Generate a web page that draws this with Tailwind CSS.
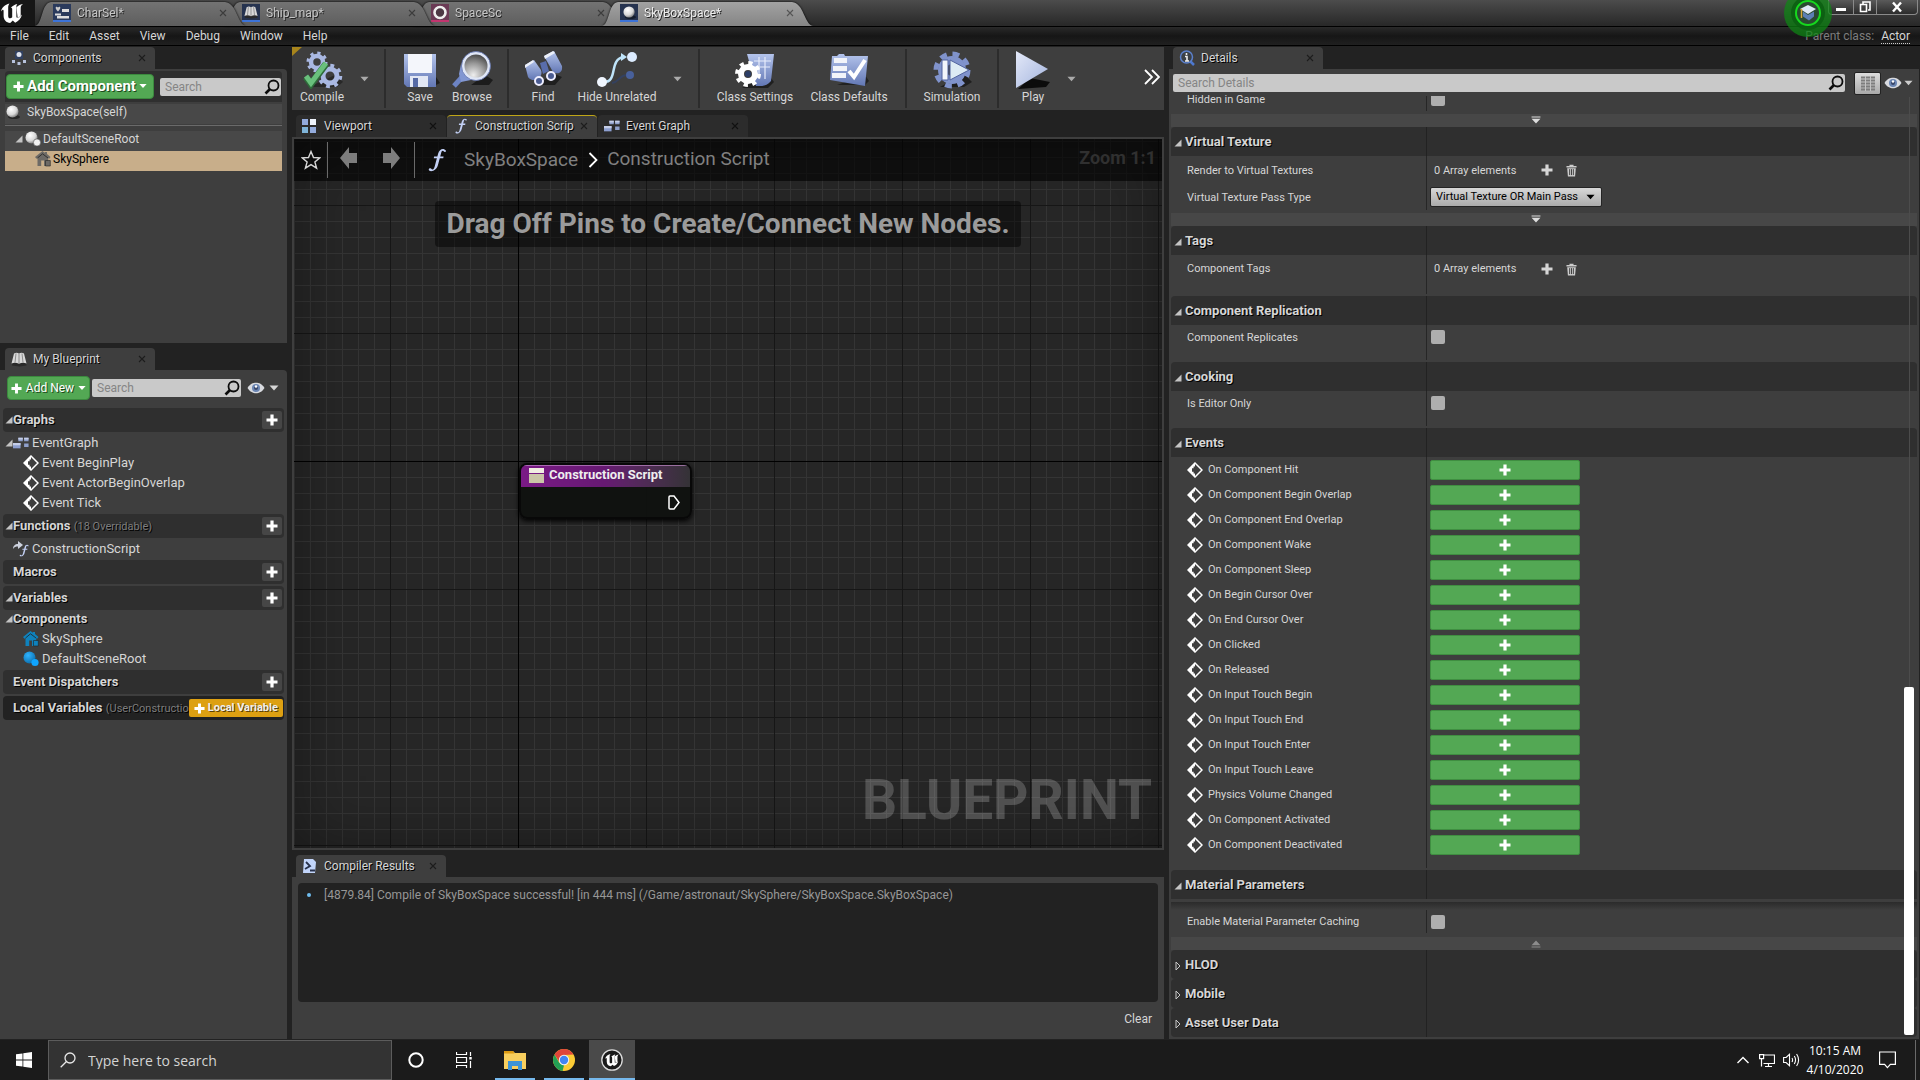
<!DOCTYPE html>
<html lang="en">
<head>
<meta charset="utf-8">
<title>SkyBoxSpace - Blueprint Editor</title>
<script src="https://cdn.jsdelivr.net/npm/@tailwindcss/browser@4"></script>
</head>
<body class="flex h-screen min-h-[960px] flex-col overflow-hidden bg-[#222] font-[Roboto,sans-serif] text-[12px] leading-4 text-[#d6d6d6]">

<svg class="absolute h-0 w-0" aria-hidden="true">
  <defs>
    <linearGradient id="gBlue" x1="0" y1="0" x2="0" y2="1"><stop offset="0" stop-color="#b4c4ec"/><stop offset="1" stop-color="#6277b4"/></linearGradient>
    <linearGradient id="gPale" x1="0" y1="0" x2="1" y2="1"><stop offset="0" stop-color="#e4e9f8"/><stop offset="1" stop-color="#a3b4de"/></linearGradient>
    <radialGradient id="gBall" cx=".38" cy=".32" r=".75"><stop offset="0" stop-color="#fff"/><stop offset=".6" stop-color="#d8d8d8"/><stop offset="1" stop-color="#6c6c6c"/></radialGradient>
    <radialGradient id="gLens" cx=".4" cy=".85" r=".9"><stop offset="0" stop-color="#eee"/><stop offset=".5" stop-color="#999"/><stop offset="1" stop-color="#333"/></radialGradient>
    <radialGradient id="gCyan" cx=".38" cy=".32" r=".75"><stop offset="0" stop-color="#2fb4ff"/><stop offset="1" stop-color="#0a6cab"/></radialGradient>
  </defs>
  <symbol id="x" viewBox="0 0 8 8"><path d="M1 1l6 6M7 1L1 7" stroke="currentColor" stroke-width="1.1"/></symbol>
  <symbol id="plus" viewBox="0 0 12 12"><path d="M4.4.5h3.2v3.9h3.9v3.2H7.6v3.9H4.4V7.6H.5V4.4h3.9z" fill="currentColor"/></symbol>
  <symbol id="down" viewBox="0 0 10 6"><path d="M.5.5h9L5 5.5z" fill="currentColor"/></symbol>
  <symbol id="open" viewBox="0 0 8 8"><path d="M7.5.5v7h-7z" fill="#c4c4c4"/></symbol>
  <symbol id="closed" viewBox="0 0 6 10"><path d="M1 1l4 4-4 4z" fill="none" stroke="#c8c8c8"/></symbol>
  <symbol id="search" viewBox="0 0 16 16"><circle cx="9.5" cy="6.5" r="5" fill="none" stroke="#0c0c0c" stroke-width="1.8"/><path d="M6 10l-4.5 4.5" stroke="#0c0c0c" stroke-width="2.6"/></symbol>
  <symbol id="eye" viewBox="0 0 18 12"><path d="M.5 6C3 2 6 .8 9 .8S15 2 17.500 6C15 10 12 11.200 9 11.200S3 10 .5 6z" fill="#d9dbe0"/><circle cx="9" cy="6" r="4" fill="#6b86b4"/><circle cx="9" cy="6" r="2" fill="#39476a"/><circle cx="9" cy="4.500" r="1.200" fill="#fff"/></symbol>
  <symbol id="diamond" viewBox="0 0 16 16"><path d="M8 1l7 7-7 7-7-7z" fill="none" stroke="#fff" stroke-width="1.500"/><path d="M8 1L1 8l7 7v-3.600H6.600V9.800H5V6.200h1.600V4.600H8z" fill="#fff"/></symbol>
  <symbol id="ball" viewBox="0 0 14 14"><ellipse cx="8" cy="12" rx="6" ry="2" fill="#000" opacity=".45"/><circle cx="6.500" cy="6.500" r="6" fill="url(#gBall)"/></symbol>
  <symbol id="root" viewBox="0 0 16 16"><circle cx="6.500" cy="6.500" r="6" fill="url(#gBall)"/><circle cx="12" cy="11.500" r="3.600" fill="#f2f2f2" stroke="#555" stroke-width=".6"/></symbol>
  <symbol id="rootBlue" viewBox="0 0 16 16"><circle cx="6.500" cy="6.500" r="6" fill="url(#gCyan)"/><circle cx="12" cy="11.500" r="3.600" fill="#0fa5ff"/></symbol>
  <symbol id="house" viewBox="0 0 16 16"><path d="M7.500 0L0 6l1.500 1.800L2.500 7v8h3.700V9.500H9V15h3.200l1-1V7l1 .8L15.500 6 12 3V1h-2l-.2.800z" fill="currentColor"/><path d="M2.500 7l5-4.200L13 7" fill="none" stroke="#222" stroke-width=".8"/><path d="M10.500 15V9.500h4.800V15z" fill="currentColor" stroke="#222" stroke-width=".6"/></symbol>
  <symbol id="nodes" viewBox="0 0 18 14"><path d="M6 1h5v4H6zM12.500 1h5v4h-5zM12.500 7.500h5v4h-5z" fill="#8fa0cc"/><path d="M0 7h8.500v6H0z" fill="#8d9fd0"/><path d="M6 1h5v2H6zM12.500 1h5v2h-5zM0 7h8.500v2.500H0z" fill="#c5cee8"/></symbol>
  <symbol id="func" viewBox="0 0 16 20"><path d="M15.500 2.200C13.500-.2 10 .6 8.900 4.800L8.300 7H5.600l-.3 1.600h2.600L6 15.700c-.6 2.200-1.700 2.900-3 1.400-.9-.7-2 0-1.900 1.100.2 1.200 2 1.500 3.800.8 2-.8 3.300-2.600 3.900-4.800l1.500-5.600h2.900l.3-1.600h-2.800l.8-3c.4-1.600 1.200-2.200 2-1.200.9.900 2 .300 2-.6z" fill="#c3d0f5"/></symbol>
  <symbol id="book" viewBox="0 0 16 16"><path d="M1 13L3 2l5-1 5 1 2.500 11-7 1z" fill="#2a2a2a" transform="translate(0 1.500)"/><path d="M.5 12.500L3 2.500c2-1.200 3.500-1 5 0 1.500-1 3.500-1.200 5 0l2.500 10c-2.500-1-5-.8-7.500.300-2.500-1.100-5-1.300-7.500-.3z" fill="#d9d9d9"/><path d="M8 2.500v10M5 2.500l-1 9M11 2.500l1 9" stroke="#777" stroke-width=".8"/></symbol>
  <symbol id="bars" viewBox="0 0 12 9"><path d="M1 .5h10v1.300H1zM1 3h10L6 8.500z" fill="currentColor"/></symbol>
  <symbol id="trash" viewBox="0 0 12 14"><path d="M.5 2h3.300V.6h4.400V2h3.300v1.800H.5z" fill="#ccc"/><path d="M1.300 4.500h9.400l-.8 9H2.100z" fill="#ccc"/><path d="M4 5.500v6.500M6 5.500v6.500M8 5.500v6.500" stroke="#333" stroke-width="1"/></symbol>
  <symbol id="ue" viewBox="0 0 24 24"><path d="M1 10.500C1.800 6.500 4.800 3.600 9.500 2.500 8.500 3.800 8.200 5 8.200 6.500V15c0 1.500.7 2.300 1.900 2.300.8 0 1.500-.4 2.100-1V8.300c0-1-.4-1.500-1.400-1.500C12.500 4.900 14.600 3.600 17.300 3c-.7.900-.9 1.700-.9 2.800v9.700c0 .9.400 1.300 1.100 1.300 1.400 0 3-1.300 4.500-3.300-1 4-3.300 6.600-6.800 8.200l-2.400-2.200-2.600 2.400C6.200 21.700 3.600 19 3.600 14.800V9.900c0-1.500-1.200-1.500-2.600.6z" fill="currentColor"/><path d="M16.400 6.500C18 4.500 20 3.400 23 3c-1.700 1.200-2.300 2.300-2.300 4v8l-3 2z" fill="currentColor"/></symbol>
</svg>

<!-- title bar -->
<header class="relative flex h-[27px] shrink-0 border-b border-black bg-linear-to-b from-[#4c4c4c] to-[#282828]">
  <div class="flex h-full w-[35px] shrink-0 items-center bg-[#161616]"><svg class="h-[24px] w-[24px] text-white"><use href="#ue"/></svg></div>
  <nav class="flex items-end text-[#c6c6c6] [text-shadow:1px_1px_0_#222]" aria-label="Open assets">
    <div class="relative z-30 drop-shadow-[0_0_1px_#000]"><div class="flex h-6 w-[211px] items-center gap-[6px] bg-linear-to-b from-[#737373] to-[#5e5e5e] pr-[19px] pb-[3px] pl-[18px] [clip-path:path('M0_24C8_22_6_1_16_0H190C202_1_202_22_211_24Z')]">
      <svg class="h-[18px] w-[18px]" viewBox="0 0 18 18"><path fill="#2a3a5c" d="M0 0h18v16H0z"/><path d="M0 17h18" stroke="#3c73d8" stroke-width="2"/><path d="M5 3.500c2-2 4 .5 0 4-4-3.500-2-6 0-4z" fill="#ccc"/><path d="M9 5h7v3H9zM2 9.500h6v2H2zM4 12h12v2.500H4z" fill="#ddd"/></svg>
      <span class="flex-1">CharSel*</span><svg class="h-2 w-2 text-[#3c3c3c]"><use href="#x"/></svg></div></div>
    <div class="relative z-20 -ml-[22px] drop-shadow-[0_0_1px_#000]"><div class="flex h-6 w-[211px] items-center gap-[6px] bg-linear-to-b from-[#737373] to-[#5e5e5e] pr-[19px] pb-[3px] pl-[18px] [clip-path:path('M0_24C8_22_6_1_16_0H190C202_1_202_22_211_24Z')]">
      <svg class="h-[18px] w-[18px]" viewBox="0 0 18 18"><path fill="#26334f" d="M0 0h18v16H0z"/><path d="M0 17h18" stroke="#3c73d8" stroke-width="2"/><use href="#book" x="2" y="1" width="14" height="14"/></svg>
      <span class="flex-1">Ship_map*</span><svg class="h-2 w-2 text-[#3c3c3c]"><use href="#x"/></svg></div></div>
    <div class="relative z-10 -ml-[22px] drop-shadow-[0_0_1px_#000]"><div class="flex h-6 w-[211px] items-center gap-[6px] bg-linear-to-b from-[#737373] to-[#5e5e5e] pr-[19px] pb-[3px] pl-[18px] [clip-path:path('M0_24C8_22_6_1_16_0H190C202_1_202_22_211_24Z')]">
      <svg class="h-[18px] w-[18px]" viewBox="0 0 18 18"><path fill="#6a3a55" d="M0 0h18v16H0z"/><path d="M0 17h18" stroke="#c2356f" stroke-width="2"/><circle cx="9" cy="8.500" r="5.500" fill="#4c3844" stroke="#eee" stroke-width="2.600"/></svg>
      <span class="flex-1">SpaceSc</span><svg class="h-2 w-2 text-[#3c3c3c]"><use href="#x"/></svg></div></div>
    <div class="relative z-40 -ml-[22px] drop-shadow-[0_0_1px_#000]"><div class="flex h-6 w-[211px] items-center gap-[6px] bg-linear-to-b from-[#a2a2a2] to-[#858585] pr-[19px] pb-[3px] pl-[18px] [clip-path:path('M0_24C8_22_6_1_16_0H190C202_1_202_22_211_24Z')]">
      <svg class="h-[18px] w-[18px]" viewBox="0 0 18 18"><path fill="#26334f" d="M0 0h18v16H0z"/><path d="M0 17h18" stroke="#3c73d8" stroke-width="2"/><use href="#ball" x="3" y="2" width="13" height="13"/></svg>
      <span class="flex-1 text-[#eee]">SkyBoxSpace*</span><svg class="h-2 w-2 text-[#555]"><use href="#x"/></svg></div></div>
  </nav>
  <div class="ml-auto flex h-[15px] pr-[2px] text-white">
    <button class="flex w-[26px] items-center justify-center rounded-bl-sm border border-t-0 border-[#8a8a8a] bg-linear-to-b from-[#5a5a5a] to-[#2c2c2c]" aria-label="Minimize"><svg class="h-3 w-3" viewBox="0 0 12 12"><path d="M1 7h10v3H1z" fill="#fff"/></svg></button>
    <button class="flex w-[23px] items-center justify-center border border-t-0 border-l-0 border-[#8a8a8a] bg-linear-to-b from-[#5a5a5a] to-[#2c2c2c]" aria-label="Restore"><svg class="h-3 w-3" viewBox="0 0 12 12"><path d="M4 3V1h7v8H9M1.500 3.500h6v7h-6z" fill="none" stroke="#fff" stroke-width="1.600"/></svg></button>
    <button class="flex w-[41px] items-center justify-center rounded-br-sm border border-t-0 border-l-0 border-[#8a8a8a] bg-linear-to-b from-[#5a5a5a] to-[#2c2c2c]" aria-label="Close"><svg class="h-3 w-3" viewBox="0 0 12 12"><path d="M2 1.500l8 9M10 1.500l-8 9" stroke="#fff" stroke-width="2.400"/></svg></button>
  </div>
  <!-- tutorial badge -->
  <svg class="absolute top-0 right-[88px] z-50 h-[38px] w-[48px]" viewBox="0 0 48 38" aria-label="Tutorials"><circle cx="24" cy="13" r="24" fill="#0d8a12" opacity=".7"/><circle cx="24" cy="13" r="17" fill="#0a5c10" opacity=".8"/><circle cx="24" cy="13" r="12" fill="#2a4a30" stroke="#16d81e" stroke-width="2"/><path d="M16 9l8-4 8 4-8 5z" fill="#dfe8f5"/><path d="M19 11.500l5 3.500 6-3.500v5l-5 4-6-4z" fill="#5c7fb5"/><path d="M17.500 9v9" stroke="#d8a63c" stroke-width="1.500"/></svg>
</header>

<!-- menu bar -->
<nav class="flex h-[19px] shrink-0 items-center gap-5 border-b border-black bg-linear-to-b from-[#2a2a2a] via-[#161616] to-[#202020] px-[10px]" aria-label="Main menu">
  <button>File</button><button>Edit</button><button>Asset</button><button>View</button><button>Debug</button><button>Window</button><button>Help</button>
  <span class="ml-auto text-[#7d7d7d]">Parent class: <a href="#" class="ml-1 border-b border-dotted border-[#ccc] text-[#d6d6d6]">Actor</a></span>
</nav>

<main class="flex min-h-0 flex-1 gap-[6px] pt-px pb-px">

  <!-- left column -->
  <div class="flex w-[287px] shrink-0 flex-col gap-[5px]">
    <section class="flex h-[296px] shrink-0 flex-col" aria-label="Components">
      <div class="ml-[5px] flex h-[22px] w-[150px] shrink-0 items-center rounded-t-sm bg-[#3e3e3e] pr-[9px] pl-[6px] [text-shadow:1px_1px_0_#000]">
        <svg class="h-4 w-4" viewBox="0 0 16 16"><path d="M4 1h8v8H4z" fill="#31405f"/><circle cx="8" cy="4.500" r="2.500" fill="#dfe3ee"/><path d="M1 10h3v3H1zM12 10h3v3h-3zM6.500 12h3v3h-3z" fill="#b7c2dc"/></svg>
        <span class="flex-1 pl-[6px]">Components</span><svg class="h-2 w-2 text-[#1d1d1d]"><use href="#x"/></svg></div>
      <div class="flex-1 rounded-tr-sm bg-[#3e3e3e] pt-[2px] pr-[5px] pl-[5px]">
        <div class="flex h-[31px] items-center gap-[6px] rounded-t bg-[#2f2f2f] px-px">
          <button class="flex h-[25px] w-[148px] items-center justify-center gap-[3px] rounded-sm border border-[#3b8a3e] bg-[#53a854] pb-px text-[15px] font-bold text-white [text-shadow:1px_1px_0_#1c4a1d]"><svg class="h-[11px] w-[11px]"><use href="#plus"/></svg>Add Component<svg class="h-[6px] w-2"><use href="#down"/></svg></button>
          <label class="flex h-[18px] flex-1 items-center rounded-xs bg-[#c9c9c9] pr-px"><input type="text" aria-label="Search components" placeholder="Search" class="w-0 flex-1 bg-transparent px-[5px] text-[12px] placeholder-[#858585] outline-none"><svg class="h-4 w-4"><use href="#search"/></svg></label>
        </div>
        <div class="mt-[2px] flex h-5 items-center gap-[7px] bg-[#484848] pb-1 pl-px"><svg class="h-[14px] w-[14px]"><use href="#ball"/></svg>SkyBoxSpace(self)</div>
        <div class="mt-px mb-[5px] h-px bg-[#6a6a6a]"></div>
        <div class="flex h-5 items-center gap-[2px] bg-[#484848] pb-1 pl-[10px]"><svg class="h-2 w-2"><use href="#open"/></svg><svg class="h-4 w-4"><use href="#root"/></svg>DefaultSceneRoot</div>
        <div class="flex h-5 items-center bg-[#c8ae8a] pb-1 pl-[30px] text-black"><svg class="mr-[2px] h-4 w-4 text-[#6d6a66]"><use href="#house"/></svg>SkySphere</div>
      </div>
    </section>

    <section class="flex min-h-0 flex-1 flex-col" aria-label="My Blueprint">
      <div class="ml-[5px] flex h-[22px] w-[150px] shrink-0 items-center rounded-t-sm bg-[#3e3e3e] pr-[9px] pl-[6px] [text-shadow:1px_1px_0_#000]"><svg class="h-4 w-4"><use href="#book"/></svg><span class="flex-1 pl-[6px]">My Blueprint</span><svg class="h-2 w-2 text-[#1d1d1d]"><use href="#x"/></svg></div>
      <div class="flex-1 rounded-tr-sm bg-[#3e3e3e] pt-[6px] pr-[3px] pl-[3px] text-[13px]">
        <div class="mb-2 flex h-6 items-center gap-[2px] pl-1 text-[12px]">
          <button class="flex h-6 w-[83px] items-center justify-center gap-1 rounded-sm border border-[#3b8a3e] bg-[#53a854] text-white [text-shadow:1px_1px_0_#1c4a1d]"><svg class="h-[11px] w-[11px]"><use href="#plus"/></svg>Add New<svg class="h-[6px] w-2"><use href="#down"/></svg></button>
          <label class="flex h-[18px] w-[149px] items-center rounded-xs bg-[#c9c9c9] pr-px"><input type="text" aria-label="Search blueprint" placeholder="Search" class="w-0 flex-1 bg-transparent px-[5px] text-[12px] placeholder-[#858585] outline-none"><svg class="h-4 w-4"><use href="#search"/></svg></label>
          <button class="ml-1 flex items-center gap-1" aria-label="View options"><svg class="h-3 w-[18px]"><use href="#eye"/></svg><svg class="h-[6px] w-[10px]"><use href="#down"/></svg></button>
        </div>

        <div class="flex h-6 items-center rounded-sm bg-[#2f2f2f] px-[2px] font-bold [text-shadow:1px_1px_0_#000]"><svg class="h-2 w-2"><use href="#open"/></svg><span class="flex-1">Graphs</span><button class="flex h-[18px] w-5 items-center justify-center rounded-xs bg-[#464646] text-white" aria-label="Add graph"><svg class="h-3 w-3"><use href="#plus"/></svg></button></div>
        <div class="flex h-5 items-center pt-px pl-[2px]"><svg class="h-2 w-2"><use href="#open"/></svg><svg class="mr-[3px] h-[14px] w-4"><use href="#nodes"/></svg>EventGraph</div>
        <div class="flex h-5 items-center gap-[3px] pt-px pl-5"><svg class="h-4 w-4"><use href="#diamond"/></svg>Event BeginPlay</div>
        <div class="flex h-5 items-center gap-[3px] pt-px pl-5"><svg class="h-4 w-4"><use href="#diamond"/></svg>Event ActorBeginOverlap</div>
        <div class="flex h-5 items-center gap-[3px] pt-px pl-5"><svg class="h-4 w-4"><use href="#diamond"/></svg>Event Tick</div>
        <div class="mt-[2px] flex h-6 items-center rounded-sm bg-[#2f2f2f] px-[2px] font-bold [text-shadow:1px_1px_0_#000]"><svg class="h-2 w-2"><use href="#open"/></svg><span class="flex-1">Functions <span class="text-[11px] font-normal text-[#7d7d7d]">(18 Overridable)</span></span><button class="flex h-[18px] w-5 items-center justify-center rounded-xs bg-[#464646] text-white" aria-label="Add function"><svg class="h-3 w-3"><use href="#plus"/></svg></button></div>
        <div class="flex h-[22px] items-center pl-[10px]"><svg class="mr-[3px] h-4 w-4" viewBox="0 0 16 16"><path d="M0 8c0-3 2-5 5-5V0l5 4-5 4V5.500C3 5.500 1 6 0 8z" fill="#cdd2de"/><use href="#func" x="6" y="3" width="10" height="13"/></svg>ConstructionScript</div>
        <div class="flex h-6 items-center rounded-sm bg-[#2f2f2f] pr-[2px] pl-[10px] font-bold [text-shadow:1px_1px_0_#000]"><span class="flex-1">Macros</span><button class="flex h-[18px] w-5 items-center justify-center rounded-xs bg-[#464646] text-white" aria-label="Add macro"><svg class="h-3 w-3"><use href="#plus"/></svg></button></div>
        <div class="mt-[2px] flex h-6 items-center rounded-sm bg-[#2f2f2f] px-[2px] font-bold [text-shadow:1px_1px_0_#000]"><svg class="h-2 w-2"><use href="#open"/></svg><span class="flex-1">Variables</span><button class="flex h-[18px] w-5 items-center justify-center rounded-xs bg-[#464646] text-white" aria-label="Add variable"><svg class="h-3 w-3"><use href="#plus"/></svg></button></div>
        <div class="flex h-[18px] items-center pl-[2px] font-bold [text-shadow:1px_1px_0_#000]"><svg class="h-2 w-2"><use href="#open"/></svg>Components</div>
        <div class="flex h-5 items-center gap-[3px] pt-px pl-5"><svg class="h-4 w-4 text-[#0f82bd]"><use href="#house"/></svg>SkySphere</div>
        <div class="flex h-5 items-center gap-[3px] pt-px pl-5"><svg class="h-4 w-4"><use href="#rootBlue"/></svg>DefaultSceneRoot</div>
        <div class="mt-[2px] flex h-6 items-center rounded-sm bg-[#2f2f2f] pr-[2px] pl-[10px] font-bold [text-shadow:1px_1px_0_#000]"><span class="flex-1">Event Dispatchers</span><button class="flex h-[18px] w-5 items-center justify-center rounded-xs bg-[#464646] text-white" aria-label="Add dispatcher"><svg class="h-3 w-3"><use href="#plus"/></svg></button></div>
        <div class="mt-[2px] flex h-6 items-center rounded-sm bg-[#222] pr-[2px] pl-[10px] font-bold [text-shadow:1px_1px_0_#000]"><span class="flex-1 whitespace-nowrap">Local Variables <span class="text-[11px] font-normal text-[#7d7d7d]">(UserConstructio</span></span><button class="flex h-[18px] w-[94px] shrink-0 items-center justify-center gap-[3px] rounded-xs bg-[#dda012] text-[11px] text-[#eee] [text-shadow:1px_1px_0_#5c4208]"><svg class="h-[11px] w-[11px] text-white"><use href="#plus"/></svg>Local Variable</button></div>
      </div>
    </section>
  </div>

  <!-- centre column -->
  <div class="-ml-px flex min-w-0 flex-1 flex-col">
    <div class="relative flex h-[63px] shrink-0 bg-[#3e3e3e] [text-shadow:1px_1px_0_#000]" role="toolbar" aria-label="Blueprint toolbar">
      <svg class="absolute top-0 left-0 h-[10px] w-[10px]" viewBox="0 0 10 10"><path d="M0 0h10L0 9z" fill="#a8851c"/></svg>
      <button class="flex w-[60px] flex-col items-center pt-1"><svg class="h-[38px] w-[42px]" viewBox="0 0 42 38"><path d="M8 36h28l6-5-6-8z" opacity=".35"/><g fill="none"><g stroke="#a9b8e2"><circle cx="16" cy="11" r="6" stroke-width="4.500"/><circle cx="16" cy="11" r="9" stroke-width="3" stroke-dasharray="3.200 3.870"/><circle cx="29" cy="25" r="7" stroke-width="5"/><circle cx="29" cy="25" r="10.500" stroke-width="3.500" stroke-dasharray="3.800 4.450"/></g><path d="M5 26l5 7L25 13" stroke="#2e6b3a" stroke-width="7"/><path d="M5 25l5 7L25 12" stroke="#69c07c" stroke-width="5"/></g></svg><span>Compile</span></button>
      <button class="w-[24px] text-[#aaa]" aria-label="Compile options"><svg class="mx-auto h-[6px] w-[9px]"><use href="#down"/></svg></button>
      <div class="mx-[8px] my-[2px] w-[2px] bg-[#2c2c2c]"></div>
      <button class="flex w-[52px] flex-col items-center pt-1"><svg class="h-[38px] w-[40px]" viewBox="0 0 40 38"><path d="M6 34h30l4-2-4-6z" opacity=".5"/><path d="M4 3h32v33H7l-3-3z" fill="url(#gBlue)"/><path d="M8 3h24v19H8z" fill="#f4f6fb"/><path d="M10 25h18v11H10z" fill="#e2e7f4"/><path d="M13 27h5v9h-5z" fill="#566aa5"/></svg><span>Save</span></button>
      <button class="flex w-[52px] flex-col items-center pt-1"><svg class="h-[38px] w-[42px]" viewBox="0 0 42 38"><path d="M20 34h18l4-5-8-5z" opacity=".55"/><path d="M13 24L3 35" stroke="#6d84c4" stroke-width="5"/><path d="M10 13l6 12 4 4-10 2-2-8z" fill="#8297d2"/><circle cx="25" cy="15" r="13" fill="url(#gLens)" stroke="#dfe6f6" stroke-width="3"/><circle cx="25" cy="15" r="14.500" fill="none" stroke="#5d70ad" stroke-width=".8"/></svg><span>Browse</span></button>
      <div class="my-[2px] mr-[8px] ml-[9px] w-[2px] bg-[#2c2c2c]"></div>
      <button class="flex w-[52px] flex-col items-center pt-1"><svg class="h-[38px] w-[40px]" viewBox="0 0 40 38"><path d="M16 34h16l7-8-10-4z" opacity=".5"/><path d="M21 5l10-5 8 15c1 7-5 9-9 6z" fill="url(#gBlue)"/><path d="M2 14l9-5 7 10c3 8-8 14-13 7z" fill="url(#gBlue)"/><path d="M17 12l6-2 3 10-6 3z" fill="#596dab"/><path d="M21 5l9-5 2 2-10 6zM2 14l8-5 1 2-9 6z" fill="#ecf0fa"/><circle cx="16" cy="30" r="4" fill="#4b5c92" stroke="#eef" stroke-width="2"/><circle cx="28" cy="25" r="4" fill="#4b5c92" stroke="#eef" stroke-width="2"/></svg><span>Find</span></button>
      <button class="flex w-[96px] flex-col items-center pt-1"><svg class="h-[38px] w-[42px]" viewBox="0 0 42 38"><path d="M16 32c8-1 6-8 16-8" fill="none" stroke="#34415f" stroke-width="2"/><circle cx="34" cy="24" r="4" fill="#48609b"/><path d="M7 31c16 1 5-23 21-25" fill="none" stroke="#bfe4fa" stroke-width="2.500"/><path d="M25 2l6 4-6 4z" fill="#bfe4fa"/><circle cx="36" cy="6" r="5" fill="#dcecff"/><circle cx="6" cy="31" r="5" fill="#f0f6ff"/></svg><span>Hide Unrelated</span></button>
      <button class="w-[24px] text-[#aaa]" aria-label="Hide options"><svg class="mx-auto h-[6px] w-[9px]"><use href="#down"/></svg></button>
      <div class="mx-[9px] my-[2px] w-[2px] bg-[#2c2c2c]"></div>
      <button class="flex w-[92px] flex-col items-center pt-1"><svg class="h-[38px] w-[42px]" viewBox="0 0 42 38"><path d="M8 37h26l6-6-6-8z" opacity=".5"/><path d="M13 3h27l-3 27c-5 6-10 5-15 5z" fill="url(#gBlue)"/><path d="M20 10h17M19 16h17M25 6v22M31 6v22" stroke="#e6ecfb" stroke-width="1.200"/><g fill="none" stroke="#fff"><circle cx="14" cy="23" r="7" stroke-width="6"/><circle cx="14" cy="23" r="11" stroke-width="4" stroke-dasharray="4.200 4.430"/></g><circle cx="14" cy="23" r="3" fill="#2c3e66"/></svg><span>Class Settings</span></button>
      <button class="flex w-[96px] flex-col items-center pt-1"><svg class="h-[38px] w-[40px]" viewBox="0 0 40 38"><path d="M8 34h28l4-4-4-6z" opacity=".45"/><path d="M3 5h5l2-2h5l1 2h23l-3 30L1 29z" fill="url(#gBlue)"/><path d="M5 7h13v5H5zM4 15h14v5H4zM3 22h14v5H3z" fill="#f2f4fa"/><path d="M20 20l5 6L36 9" fill="none" stroke="#fff" stroke-width="4"/></svg><span>Class Defaults</span></button>
      <div class="mx-[8px] my-[2px] w-[2px] bg-[#2c2c2c]"></div>
      <button class="flex w-[74px] flex-col items-center pt-1"><svg class="h-[38px] w-[40px]" viewBox="0 0 40 38"><path d="M8 36h24l8-5-8-8z" opacity=".5"/><g fill="none" stroke="#8093cc"><circle cx="20" cy="19" r="10" stroke-width="8"/><circle cx="20" cy="19" r="16" stroke-width="5" stroke-dasharray="6.800 5.766"/></g><path d="M10 9h6v20h-6z" fill="#f2f5fb" stroke="#51639e"/><path d="M18 9l19 10-19 10z" fill="#dceaf4" stroke="#51639e"/></svg><span>Simulation</span></button>
      <div class="mx-[8px] my-[2px] w-[2px] bg-[#2c2c2c]"></div>
      <button class="flex w-[52px] flex-col items-center pt-1"><svg class="h-[38px] w-[40px]" viewBox="0 0 40 38"><path d="M5 38l28-2 4-5-20-4z" opacity=".8"/><path d="M3 0l32 18L3 37z" fill="url(#gPale)"/></svg><span>Play</span></button>
      <button class="w-[24px] text-[#aaa]" aria-label="Play options"><svg class="mx-auto h-[6px] w-[9px]"><use href="#down"/></svg></button>
      <button class="mr-1 mb-[3px] ml-auto" aria-label="More"><svg class="h-4 w-4" viewBox="0 0 16 16"><path d="M1 1l7 7-7 7M8 1l7 7-7 7" fill="none" stroke="#fff" stroke-width="1.800"/></svg></button>
    </div>

    <div class="mt-[5px] flex h-[22px] shrink-0 gap-px pl-1 [text-shadow:1px_1px_0_#000]" role="tablist">
      <div role="tab" class="flex w-[150px] items-center rounded-t-sm bg-[#2c2c2c] pr-[9px] pl-[5px]"><svg class="h-4 w-4" viewBox="0 0 16 16"><path d="M1 1h6v6H1zM9 9h6v6H9z" fill="#93abdc"/><path d="M9 1h6v6H9z" fill="#eef3fb"/><path d="M1 9h6v6H1z" fill="#7fb4d8"/></svg><span class="flex-1 pl-[7px]">Viewport</span><svg class="h-2 w-2 text-[#111]"><use href="#x"/></svg></div>
      <div role="tab" aria-selected="true" class="flex w-[150px] items-center rounded-t-sm border-t border-[#bfa617] bg-[#3e3e3e] pr-[9px] pb-px pl-[6px]"><svg class="h-4 w-4"><use href="#func"/></svg><span class="flex-1 pl-[6px] whitespace-nowrap">Construction Scrip</span><svg class="h-2 w-2 text-[#1d1d1d]"><use href="#x"/></svg></div>
      <div role="tab" class="flex w-[150px] items-center rounded-t-sm bg-[#2c2c2c] pr-[9px] pl-[6px]"><svg class="h-4 w-4"><use href="#nodes"/></svg><span class="flex-1 pl-[6px]">Event Graph</span><svg class="h-2 w-2 text-[#111]"><use href="#x"/></svg></div>
    </div>

    <section class="relative min-h-0 flex-1 overflow-hidden border-2 border-[#3e3e3e] bg-[#262626]" aria-label="Graph">
      <svg class="absolute inset-0 h-full w-full" aria-hidden="true">
        <defs>
          <pattern id="minor" width="16" height="16" patternUnits="userSpaceOnUse" y="2"><path d="M0 .5h16M.5 0v16" stroke="#343434" fill="none"/></pattern>
          <pattern id="major" width="128" height="128" patternUnits="userSpaceOnUse" x="96" y="66"><path d="M0 .5h128M.5 0v128" stroke="#161616" fill="none"/></pattern>
        </defs>
        <rect width="100%" height="100%" fill="url(#minor)"/><rect width="100%" height="100%" fill="url(#major)"/>
        <path d="M0 322.500h3000M224.500 0v3000" stroke="#000"/>
      </svg>
      <div class="absolute inset-0 shadow-[inset_0_0_60px_rgba(0,0,0,0.35)]"></div>
      <nav class="relative flex h-[42px] items-center bg-black/60 pl-[7px] text-[19px] leading-6 text-[#808080]" aria-label="Breadcrumb">
        <button aria-label="Bookmark"><svg class="h-5 w-5" viewBox="0 0 20 20"><path d="M10 1.500l2.500 6 6.300.4-4.900 4 1.700 6.200L10 14.600l-5.600 3.500 1.700-6.200-4.900-4 6.300-.4z" fill="none" stroke="#d8d8d8" stroke-width="1.400"/></svg></button>
        <div class="mr-[12px] ml-[6px] h-9 w-px bg-[#6a6a6a]"></div>
        <button class="pb-1" aria-label="Back"><svg class="h-[24px] w-[18px]" viewBox="0 0 18 24"><path d="M0 12L9 1v6h8v10H9v6z" fill="#7d7d7d"/></svg></button>
        <button class="ml-[24px] pb-1" aria-label="Forward"><svg class="h-[24px] w-[18px]" viewBox="0 0 18 24"><path d="M18 12L9 1v6H1v10h8v6z" fill="#7d7d7d"/></svg></button>
        <div class="mr-[12px] ml-[14px] h-9 w-px bg-[#6a6a6a]"></div>
        <svg class="mr-[17px] h-6 w-5"><use href="#func"/></svg>
        <a href="#">SkyBoxSpace</a>
        <svg class="mr-[9px] ml-[10px] h-4 w-[10px]" viewBox="0 0 10 16"><path d="M1.500 1l7 7-7 7" fill="none" stroke="#fff" stroke-width="1.800"/></svg>
        <a href="#" class="pb-[2px]">Construction Script</a>
        <span class="mr-[6px] ml-auto pb-1 text-[18px] font-bold text-[#303030]">Zoom 1:1</span>
      </nav>
      <div class="relative mx-auto mt-5 flex h-[46px] w-[586px] items-center justify-center rounded-sm bg-black/45 text-[28px] font-bold whitespace-nowrap text-[#9b9b9b]">Drag Off Pins to Create/Connect New Nodes.</div>
      <div class="absolute right-[10px] bottom-[16px] text-[55px] leading-[64px] font-bold text-white/20">BLUEPRINT</div>
      <!-- function entry node -->
      <div class="absolute top-[324px] left-[225px] h-[56px] w-[173px] overflow-hidden rounded-lg border-2 border-[#080808] bg-[#0f110f]/95 shadow-[0_2px_5px_#000]">
        <div class="flex h-[22px] items-center gap-[5px] border-t border-[#c08ac8]/70 bg-linear-to-r from-[#7a1a86] via-[#661972] to-[#343236] pb-[3px] pl-2 text-[13px] font-bold text-[#eee]"><svg class="h-[15px] w-[15px]" viewBox="0 0 15 15"><path d="M0 0h15v5H0z" fill="#f1ede2"/><path d="M0 6h15v9H0z" fill="#cbc5a8"/></svg>Construction Script</div>
        <svg class="mt-2 mr-[10px] ml-auto h-[15px] w-3" viewBox="0 0 12 15"><path d="M1 2q0-1 1-1h4l5 6.500L6 14H2q-1 0-1-1z" fill="none" stroke="#fff" stroke-width="1.500"/></svg>
      </div>
    </section>

    <section class="mt-[5px] flex h-[184px] shrink-0 flex-col" aria-label="Compiler Results">
      <div class="ml-1 flex h-[22px] w-[150px] shrink-0 items-center rounded-t-sm bg-[#3e3e3e] pr-[9px] pl-[6px] [text-shadow:1px_1px_0_#000]"><svg class="h-4 w-4" viewBox="0 0 16 16"><path d="M2 1h9l3 3-1 11H1z" fill="#c2d5fa"/><path d="M4 4l4 4-5 3M8 12.500h5" fill="none" stroke="#26304a" stroke-width="1.800"/></svg><span class="flex-1 pl-[6px]">Compiler Results</span><svg class="h-2 w-2 text-[#1d1d1d]"><use href="#x"/></svg></div>
      <div class="flex flex-1 flex-col bg-[#3e3e3e] p-[6px] pb-[12px]">
        <ul class="h-[119px] rounded-sm bg-[#222] px-[9px] py-1 text-[#979797]"><li class="flex items-center"><span class="mr-[13px] h-1 w-1 rounded-full bg-[#6fbdf0]"></span>[4879.84] Compile of SkyBoxSpace successful! [in 444 ms] (/Game/astronaut/SkySphere/SkyBoxSpace.SkyBoxSpace)</li></ul>
        <button class="mt-auto mr-[6px] self-end">Clear</button>
      </div>
    </section>
  </div>

  <!-- details -->
  <section class="-ml-px flex w-[751px] shrink-0 flex-col pr-px" aria-label="Details">
    <div class="ml-1 flex h-[22px] w-[150px] shrink-0 items-center rounded-t-sm bg-[#3e3e3e] pr-[9px] pl-[6px] [text-shadow:1px_1px_0_#000]"><svg class="h-4 w-4" viewBox="0 0 16 16"><path d="M11 11l4 4" stroke="#4d78d0" stroke-width="2.500"/><circle cx="7.500" cy="7" r="6" fill="#3c4046" stroke="#5b80cc" stroke-width="1.500"/><path d="M7.500 3v2M6 6.500h2V11M6 11h4" fill="none" stroke="#eee" stroke-width="1.600"/></svg><span class="flex-1 pl-[6px]">Details</span><svg class="h-2 w-2 text-[#1d1d1d]"><use href="#x"/></svg></div>
    <div class="relative flex flex-1 flex-col bg-[#3e3e3e] px-[2px] text-[11px]">
      <div class="flex h-[27px] shrink-0 items-center pt-px pl-[2px]">
        <label class="mr-[9px] flex h-[18px] flex-1 items-center rounded-xs bg-[#c9c9c9] pr-px"><input type="text" aria-label="Search details" placeholder="Search Details" class="w-0 flex-1 bg-transparent px-[5px] text-[12px] placeholder-[#858585] outline-none"><svg class="h-4 w-4"><use href="#search"/></svg></label>
        <button class="mr-[3px] flex h-[23px] w-[27px] items-center justify-center rounded-xs border border-[#222] bg-linear-to-b from-[#ddd] to-[#aaa]" aria-label="Property matrix"><svg class="h-[15px] w-[14px]" viewBox="0 0 14 15"><path d="M0 1.500h14M0 4.500h14M0 7.500h14M0 10.500h14M0 13.500h14" stroke="#7d7d7d" stroke-width="2"/><path d="M4.500 0v15M9.500 0v15" stroke="#c4c4c4"/></svg></button>
        <button class="mr-1 flex items-center gap-[2px] text-[#ccc]" aria-label="View options"><svg class="h-3 w-[18px]"><use href="#eye"/></svg><svg class="h-[6px] w-[9px]"><use href="#down"/></svg></button>
      </div>

      <div class="flex h-[15px] items-center"><label for="hidden" class="flex h-full w-[256px] items-center border-r border-[#262626] pb-[7px] pl-4">Hidden in Game</label><div class="h-[15px] overflow-hidden pl-[4px]"><input id="hidden" type="checkbox" class="block h-[10px] w-[14px] appearance-none rounded-b-xs bg-[#aeaeae]"></div></div>
      <button class="mt-[3px] flex h-[13px] items-center justify-center bg-[#474747] pr-4 pb-[2px] text-[#ddd]" aria-label="Show advanced"><svg class="h-2 w-3"><use href="#bars"/></svg></button>

      <h2 class="flex h-[29px] items-center rounded-t-sm bg-[#2f2f2f] text-[13px] font-bold [text-shadow:1px_1px_0_#000]"><span class="flex h-full w-[256px] items-center gap-[3px] border-r border-[#222] pl-[3px]"><svg class="mt-[3px] h-2 w-2"><use href="#open"/></svg>Virtual Texture</span></h2>
      <div class="flex h-7 items-center"><span class="flex h-full w-[256px] items-center border-r border-[#262626] pt-px pl-4">Render to Virtual Textures</span><span class="w-[114px] pt-px pl-[7px]">0 Array elements</span><button aria-label="Add element" class="mr-[13px]"><svg class="h-3 w-3"><use href="#plus"/></svg></button><button aria-label="Clear elements"><svg class="h-[13px] w-[11px]"><use href="#trash"/></svg></button></div>
      <div class="flex h-[26px] items-center"><label for="pass" class="flex h-full w-[256px] items-center border-r border-[#262626] pt-px pl-4">Virtual Texture Pass Type</label>
        <div class="relative ml-[3px]"><select id="pass" class="block h-[20px] w-[172px] appearance-none rounded-xs border border-[#242424] bg-linear-to-b from-[#d8d8d8] to-[#ababab] pl-[5px] text-[11px] leading-4 text-black"><option>Virtual Texture OR Main Pass</option></select><svg class="pointer-events-none absolute top-[7px] right-[7px] h-[6px] w-[9px] text-black"><use href="#down"/></svg></div></div>
      <button class="mt-[3px] flex h-[13px] items-center justify-center bg-[#474747] pr-4 pb-[2px] text-[#ddd]" aria-label="Show advanced"><svg class="h-2 w-3"><use href="#bars"/></svg></button>

      <h2 class="flex h-[29px] items-center rounded-t-sm bg-[#2f2f2f] text-[13px] font-bold [text-shadow:1px_1px_0_#000]"><span class="flex h-full w-[256px] items-center gap-[3px] border-r border-[#222] pl-[3px]"><svg class="mt-[3px] h-2 w-2"><use href="#open"/></svg>Tags</span></h2>
      <div class="mb-[2px] flex h-[39px]"><span class="w-[256px] border-r border-[#262626] pt-[6px] pl-4">Component Tags</span><div class="flex h-[28px] items-center"><span class="w-[114px] pl-[7px]">0 Array elements</span><button aria-label="Add element" class="mr-[13px]"><svg class="h-3 w-3"><use href="#plus"/></svg></button><button aria-label="Clear elements"><svg class="h-[13px] w-[11px]"><use href="#trash"/></svg></button></div></div>

      <h2 class="flex h-[29px] items-center rounded-t-sm bg-[#2f2f2f] text-[13px] font-bold [text-shadow:1px_1px_0_#000]"><span class="flex h-full w-[256px] items-center gap-[3px] border-r border-[#222] pl-[3px]"><svg class="mt-[3px] h-2 w-2"><use href="#open"/></svg>Component Replication</span></h2>
      <div class="mb-[2px] flex h-[35px]"><label for="repl" class="w-[256px] border-r border-[#262626] pt-[5px] pl-4">Component Replicates</label><input id="repl" type="checkbox" class="mt-[5px] ml-1 h-[14px] w-[14px] appearance-none rounded-xs bg-[#aeaeae]"></div>

      <h2 class="flex h-[29px] items-center rounded-t-sm bg-[#2f2f2f] text-[13px] font-bold [text-shadow:1px_1px_0_#000]"><span class="flex h-full w-[256px] items-center gap-[3px] border-r border-[#222] pl-[3px]"><svg class="mt-[3px] h-2 w-2"><use href="#open"/></svg>Cooking</span></h2>
      <div class="mb-[2px] flex h-[35px]"><label for="editor" class="w-[256px] border-r border-[#262626] pt-[5px] pl-4">Is Editor Only</label><input id="editor" type="checkbox" class="mt-[5px] ml-1 h-[14px] w-[14px] appearance-none rounded-xs bg-[#aeaeae]"></div>

      <h2 class="flex h-[29px] items-center rounded-t-sm bg-[#2f2f2f] text-[13px] font-bold [text-shadow:1px_1px_0_#000]"><span class="flex h-full w-[256px] items-center gap-[3px] border-r border-[#222] pl-[3px]"><svg class="mt-[3px] h-2 w-2"><use href="#open"/></svg>Events</span></h2>
      <div id="events"></div>
      <div class="mb-[2px] h-[11px] w-[256px] border-r border-[#262626]"></div>

      <h2 class="flex h-[29px] items-center rounded-t-sm bg-[#2f2f2f] text-[13px] font-bold [text-shadow:1px_1px_0_#000]"><span class="flex h-full w-[256px] items-center gap-[3px] border-r border-[#222] pl-[3px]"><svg class="mt-[3px] h-2 w-2"><use href="#open"/></svg>Material Parameters</span></h2>
      <div class="mt-[3px] h-2 bg-linear-to-b from-[#2b2b2b] to-[#3e3e3e]"></div>
      <div class="flex h-[23px] items-center"><label for="cache" class="flex h-full w-[256px] items-center border-r border-[#262626] pt-px pl-4">Enable Material Parameter Caching</label><input id="cache" type="checkbox" class="ml-1 h-[14px] w-[14px] appearance-none rounded-xs bg-[#aeaeae]"></div>
      <button class="mt-[4px] flex h-[13px] items-center justify-center bg-[#474747] pr-4 text-[#8c8c8c]" aria-label="Hide advanced"><svg class="h-2 w-3 rotate-180"><use href="#bars"/></svg></button>

      <h2 class="flex h-[29px] items-center rounded-sm bg-[#2f2f2f] text-[13px] font-bold [text-shadow:1px_1px_0_#000]"><span class="flex h-full w-[256px] items-center gap-[4px] border-r border-[#222] pl-1"><svg class="mt-[3px] h-[10px] w-[6px]"><use href="#closed"/></svg>HLOD</span></h2>
      <h2 class="flex h-[29px] items-center rounded-sm bg-[#2f2f2f] text-[13px] font-bold [text-shadow:1px_1px_0_#000]"><span class="flex h-full w-[256px] items-center gap-[4px] border-r border-[#222] pl-1"><svg class="mt-[3px] h-[10px] w-[6px]"><use href="#closed"/></svg>Mobile</span></h2>
      <h2 class="flex h-[29px] items-center rounded-sm bg-[#2f2f2f] text-[13px] font-bold [text-shadow:1px_1px_0_#000]"><span class="flex h-full w-[256px] items-center gap-[4px] border-r border-[#222] pl-1"><svg class="mt-[3px] h-[10px] w-[6px]"><use href="#closed"/></svg>Asset User Data</span></h2>

      <!-- scrollbar -->
      <div class="absolute top-[28px] right-[9px] bottom-1 w-px bg-[#4c4c4c]"></div>
      <div class="absolute right-[5px] bottom-1 h-[348px] w-[10px] rounded-xs bg-white"></div>
    </div>
  </section>
</main>

<!-- taskbar -->
<footer class="flex h-10 shrink-0 items-center bg-[#1b1b1b] font-['Open_Sans',sans-serif] text-white">
  <button class="flex h-full w-12 items-center justify-center" aria-label="Start"><svg class="h-4 w-4" viewBox="0 0 16 16"><path d="M0 2.300l6.500-.9v6.100H0zM7.300 1.300L16 0v7.500H7.300zM0 8.400h6.500v6.200L0 13.700zM7.300 8.400H16V16l-8.700-1.300z" fill="#fff"/></svg></button>
  <label class="flex h-full w-[344px] items-center border border-[#5c5c5c] bg-[#333] pl-[11px]"><svg class="h-4 w-4" viewBox="0 0 16 16"><circle cx="10" cy="6" r="5" fill="none" stroke="#e8e8e8" stroke-width="1.300"/><path d="M6.500 9.500L.7 15.300" stroke="#e8e8e8" stroke-width="1.300"/></svg><input type="text" aria-label="Windows search" placeholder="Type here to search" class="w-0 flex-1 bg-transparent pt-[2px] pl-3 text-[14px] placeholder-[#d4d4d4] outline-none"></label>
  <button class="flex h-full w-12 items-center justify-center" aria-label="Cortana"><svg class="h-4 w-4" viewBox="0 0 16 16"><circle cx="8" cy="8" r="6.700" fill="none" stroke="#fff" stroke-width="2"/></svg></button>
  <button class="flex h-full w-12 items-center justify-center" aria-label="Task view"><svg class="h-4 w-4" viewBox="0 0 16 16"><path d="M.5 0v2.500h10V0M.5 16v-2.500h10V16M.5 5.500h10v5H.5zM14.500 0v4M14.500 9v7" fill="none" stroke="#fff" stroke-width="1.200"/><path d="M13.300 5h2.400v2.500h-2.400z" fill="#fff"/></svg></button>
  <button class="ml-[7px] flex h-full w-10 items-center justify-center border-b-2 border-[#76b9ed] pt-px" aria-label="File Explorer"><svg class="h-[22px] w-[22px]" viewBox="0 0 22 22"><path d="M0 2h9l2 2h11v16H0z" fill="#f8cf5e"/><path d="M0 2h9l1.500 2.500H0z" fill="#dc9a12"/><path d="M4 12h14v9h-4v-4H8v4H4z" fill="#3c93d6"/></svg></button>
  <button class="ml-[9px] flex h-full w-10 items-center justify-center border-b-2 border-[#76b9ed] pt-px" aria-label="Chrome"><svg class="h-[22px] w-[22px]" viewBox="0 0 22 22"><circle cx="11" cy="11" r="11" fill="#fbcb35"/><path d="M1.500 5.500A11 11 0 0 1 20.500 5.500L11 6 6.700 13.500z" fill="#e0463a"/><path d="M1.500 5.500L6.200 13.700 11 16.500 9.500 21.900A11 11 0 0 1 1.500 5.500z" fill="#23a055"/><circle cx="11" cy="11" r="5.200" fill="#f4f4f4"/><circle cx="11" cy="11" r="4.200" fill="#4285f4"/></svg></button>
  <button class="ml-[5px] flex h-full w-[46px] items-center justify-center border-b-2 border-[#76b9ed] bg-[#4a4a4a] pt-px" aria-label="Unreal Engine"><svg class="h-[22px] w-[22px]" viewBox="0 0 22 22"><circle cx="11" cy="11" r="10.200" fill="#1a1a1a" stroke="#ddd" stroke-width="1.300"/><use href="#ue" x="3.500" y="3.500" width="15" height="15"/></svg></button>
  <div class="ml-auto flex h-full items-center">
    <svg class="h-4 w-3" viewBox="0 0 12 16"><path d="M.5 11L6 5.500l5.500 5.500" fill="none" stroke="#fff" stroke-width="1.400"/></svg>
    <svg class="ml-[10px] h-4 w-4" viewBox="0 0 16 16"><path d="M4.500 3h11v8.500h-11M9.500 11.500v3M6 14.500h7M2.500 7v7.500M.6 2.600h4v4h-4z" fill="none" stroke="#fff" stroke-width="1.200"/></svg>
    <svg class="ml-2 h-4 w-[17px]" viewBox="0 0 17 16"><path d="M.6 5.500h2.500l3.400-3.200v11.400L3.100 10.500H.6zM9 6q1.200 2 0 4M11.300 4q2.500 4 0 8M13.600 2q4 6 0 12" fill="none" stroke="#fff" stroke-width="1.100"/></svg>
    <div class="ml-[4px] w-[62px] text-center text-[12px] leading-[19px]">10:15 AM<br>4/10/2020</div>
    <svg class="ml-[13px] h-[18px] w-[17px]" viewBox="0 0 17 18"><path d="M.6 1h15.800v12.400h-5l-3 3.300-2.800-3.300h-5z" fill="none" stroke="#fff" stroke-width="1.200"/></svg>
    <div class="mr-1 ml-[19px] h-full w-px bg-[#6a6a6a]"></div>
  </div>
</footer>

<script>
  const events = ['On Component Hit', 'On Component Begin Overlap', 'On Component End Overlap', 'On Component Wake', 'On Component Sleep', 'On Begin Cursor Over', 'On End Cursor Over', 'On Clicked', 'On Released', 'On Input Touch Begin', 'On Input Touch End', 'On Input Touch Enter', 'On Input Touch Leave', 'Physics Volume Changed', 'On Component Activated', 'On Component Deactivated'];
  document.getElementById('events').innerHTML = events.map(name => `
    <div class="flex h-[25px] items-center">
      <span class="flex h-full w-[256px] items-center gap-[5px] border-r border-[#262626] pl-4"><svg class="h-4 w-4"><use href="#diamond"/></svg>${name}</span>
      <button class="ml-[3px] flex h-5 w-[150px] items-center justify-center rounded-xs border border-[#3f8e41] bg-[#53a854] text-white" aria-label="Add ${name}"><svg class="h-3 w-3"><use href="#plus"/></svg></button>
    </div>`).join('');
</script>
</body>
</html>
